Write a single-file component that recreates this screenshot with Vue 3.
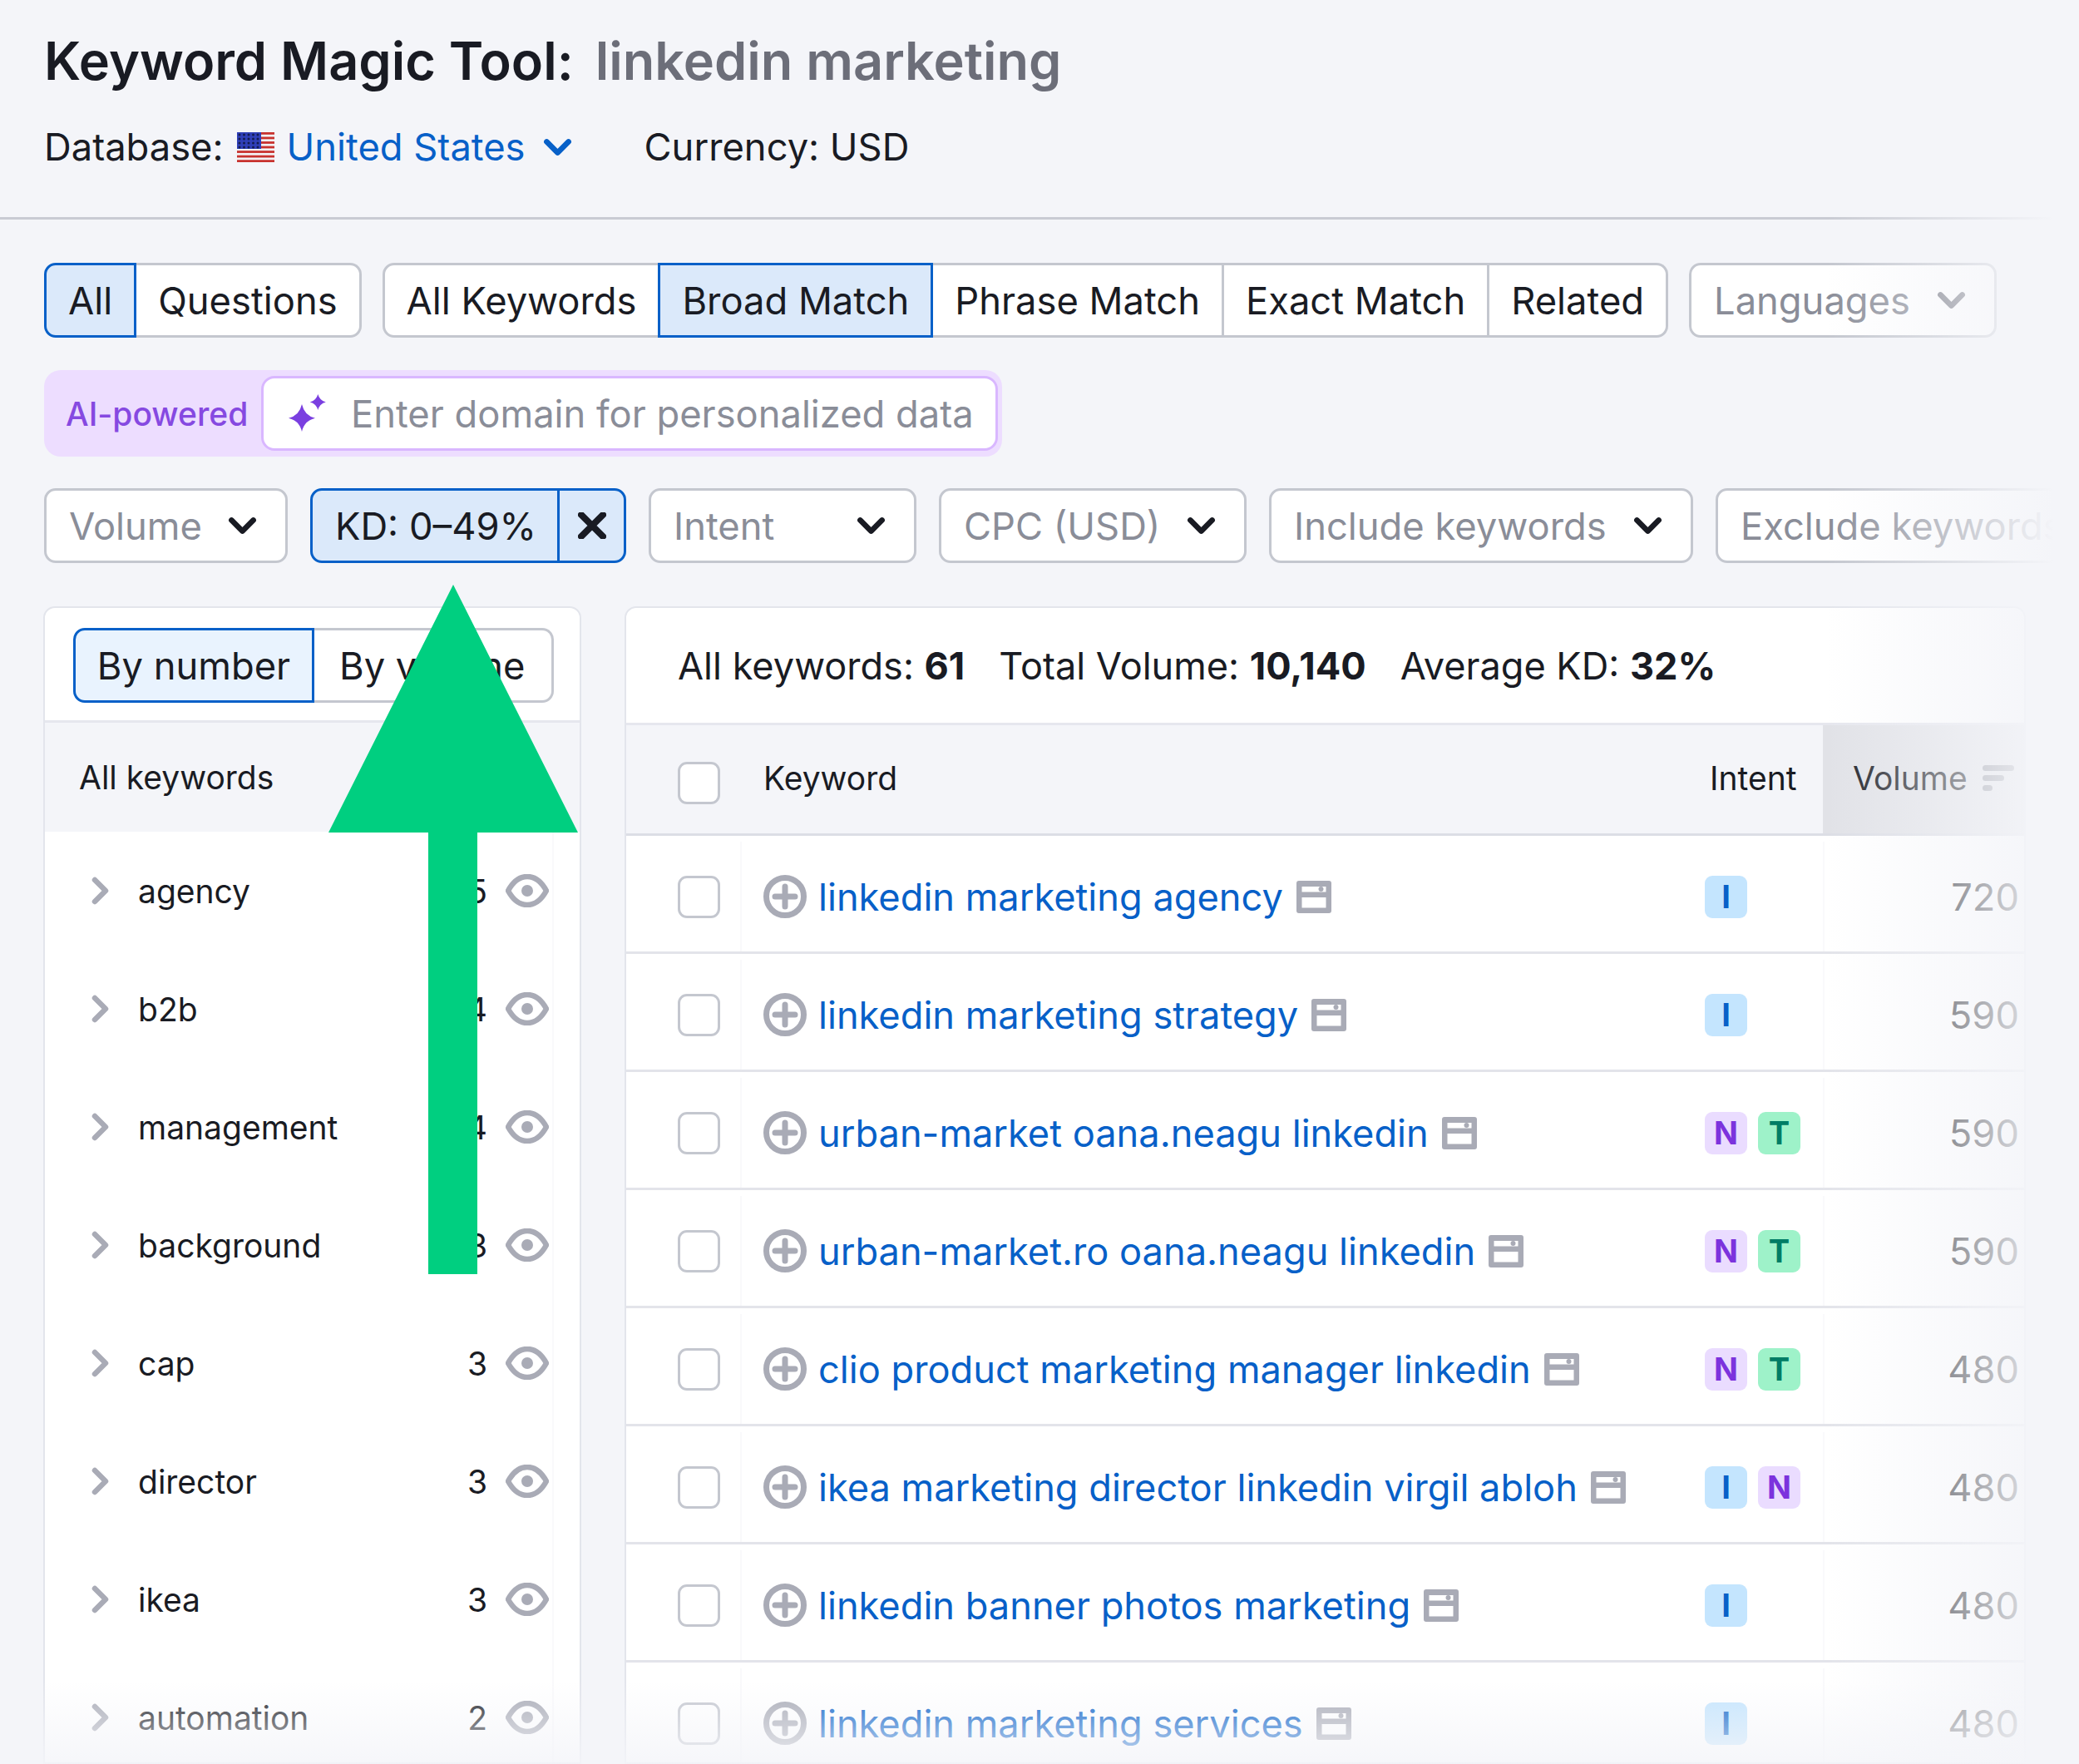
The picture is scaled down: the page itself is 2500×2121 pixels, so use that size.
<template>
  <main class="page">
    <header class="top">
      <h1><span>Keyword Magic Tool:</span><span class="query">linkedin marketing</span></h1>
      <div class="db-row">
        <span>Database:</span>
        <svg class="flag" viewBox="0 0 45 36">
          <rect width="45" height="36" fill="#f2f2f4" />
          <rect v-for="i in 7" :key="i" :y="(i - 1) * 5.54" width="45" height="2.77" fill="#c8322e" />
          <rect width="29" height="20" fill="#2f3fb8" />
          <g fill="#141c4f">
            <template v-for="y in [3, 8, 13, 18]" :key="y">
              <circle v-for="x in [3, 8.500, 14, 19.500, 25]" :key="x" :cx="x" :cy="y" r="1.500" />
            </template>
          </g>
        </svg>
        <a class="db-link">United States</a>
        <svg class="chev blue" viewBox="0 0 32 20"><path d="M4 4l12 12L28 4" /></svg>
        <span class="currency">Currency: USD</span>
      </div>
    </header>

    <section class="controls">
      <div class="tabs-row">
        <div class="seg">
          <button class="active">All</button>
          <button>Questions</button>
        </div>
        <div class="seg">
          <button>All Keywords</button>
          <button class="active">Broad Match</button>
          <button>Phrase Match</button>
          <button>Exact Match</button>
          <button>Related</button>
        </div>
        <button class="select languages">
          Languages
          <svg class="chev grey" viewBox="0 0 32 20"><path d="M4 4l12 12L28 4" /></svg>
        </button>
      </div>

      <div class="ai-box">
        <span class="ai-label">AI-powered</span>
        <div class="ai-input">
          <svg class="sparkle" viewBox="0 0 46 46">
            <path d="M16 12Q19 25.700 32 28.700 19 31.700 16 45 13 31.700 0 28.700 13 25.700 16 12z" />
            <path d="M35.300 0Q37.300 7.500 44.800 9.500 37.300 11.500 35.300 19 33.300 11.500 25.800 9.500 33.300 7.500 35.300 0z" />
          </svg>
          <span>Enter domain for personalized data</span>
        </div>
      </div>

      <div class="filters">
        <button class="select f-volume">
          Volume
          <svg class="chev" viewBox="0 0 32 20"><path d="M4 4l12 12L28 4" /></svg>
        </button>
        <div class="kd">
          <span class="kd-text">KD: 0–49%</span>
          <span class="kd-close">
            <svg viewBox="0 0 34 32"><path d="M4 3l26 26M30 3L4 29" /></svg>
          </span>
        </div>
        <button v-for="f in filters" :key="f.name" class="select" :class="f.cls">
          {{ f.name }}
          <svg class="chev" viewBox="0 0 32 20"><path d="M4 4l12 12L28 4" /></svg>
        </button>
      </div>
    </section>

    <section class="panels">
      <aside class="side">
        <div class="side-top">
          <div class="seg small">
            <button class="active">By number</button>
            <button>By volume</button>
          </div>
        </div>
        <div class="side-head">
          <span>All keywords</span>
        </div>
        <div v-for="g in groups" :key="g.name" class="side-row">
          <svg class="side-chev" viewBox="0 0 22 34"><path d="M4 4l13 13L4 30" /></svg>
          <span class="side-name">{{ g.name }}</span>
          <span class="side-count">{{ g.count }}</span>
          <svg class="eye" viewBox="0 0 52 40">
            <path d="M3 20C9 9 17 3 26 3s17 6 23 17c-6 11-14 17-23 17S9 31 3 20z" />
            <circle cx="26" cy="20" r="7" />
          </svg>
        </div>
      </aside>

      <div class="main">
        <div class="summary">
          <span>All keywords: <b>61</b></span>
          <span>Total Volume: <b>10,140</b></span>
          <span>Average KD: <b>32%</b></span>
        </div>
        <div class="grid-row head">
          <div class="check-cell"><span class="check"></span></div>
          <div class="head-cell">Keyword</div>
          <div class="head-cell intent-head">Intent</div>
          <div class="vol-head">
            Volume
            <svg class="sort" viewBox="0 0 38 31">
              <rect width="38" height="7" rx="3.500" />
              <rect y="12" width="26" height="7" rx="3.500" />
              <rect y="24" width="12" height="7" rx="3.500" />
            </svg>
          </div>
        </div>
        <div v-for="r in rows" :key="r.text" class="grid-row">
          <div class="check-cell"><span class="check"></span></div>
          <div class="kw">
            <svg class="plus" viewBox="0 0 52 52">
              <circle cx="26" cy="26" r="22.500" />
              <path d="M26 14v24M14 26h24" />
            </svg>
            <a>{{ r.text }}</a>
            <svg class="feature" viewBox="0 0 42 39">
              <path fill-rule="evenodd" d="M3 0h36a3 3 0 0 1 3 3v33a3 3 0 0 1-3 3H3a3 3 0 0 1-3-3V3a3 3 0 0 1 3-3zm3.500 7v6.500h29V7h-29zm0 13v12.500h29V20h-29z" />
              <circle cx="29.500" cy="10" r="3" />
            </svg>
          </div>
          <div class="intent">
            <span v-for="b in r.intent" :key="b" class="badge" :class="b">{{ b }}</span>
          </div>
          <div class="vol">{{ r.volume }}</div>
        </div>
      </div>
    </section>

    <div class="fade-right"></div>
    <div class="fade-bottom"></div>

    <svg class="arrow" viewBox="0 0 300 829">
      <path d="M150 0L300 298H179V829H120V298H0z" />
    </svg>
  </main>
</template>

<script setup>
const filters = [
  { name: 'Intent', cls: 'f-intent' },
  { name: 'CPC (USD)', cls: 'f-cpc' },
  { name: 'Include keywords', cls: 'f-include' },
  { name: 'Exclude keywords', cls: 'f-exclude' }
];

const groups = [
  { name: 'agency', count: 5 },
  { name: 'b2b', count: 4 },
  { name: 'management', count: 4 },
  { name: 'background', count: 3 },
  { name: 'cap', count: 3 },
  { name: 'director', count: 3 },
  { name: 'ikea', count: 3 },
  { name: 'automation', count: 2 }
];

const rows = [
  { text: 'linkedin marketing agency', intent: ['I'], volume: 720 },
  { text: 'linkedin marketing strategy', intent: ['I'], volume: 590 },
  { text: 'urban-market oana.neagu linkedin', intent: ['N', 'T'], volume: 590 },
  { text: 'urban-market.ro oana.neagu linkedin', intent: ['N', 'T'], volume: 590 },
  { text: 'clio product marketing manager linkedin', intent: ['N', 'T'], volume: 480 },
  { text: 'ikea marketing director linkedin virgil abloh', intent: ['I', 'N'], volume: 480 },
  { text: 'linkedin banner photos marketing', intent: ['I'], volume: 480 },
  { text: 'linkedin marketing services', intent: ['I'], volume: 480 }
];
</script>

<style>
html, body {
  margin: 0;
  background: #f4f5f9;
}
</style>

<style scoped>
.page {
  position: relative;
  width: 2500px;
  height: 2121px;
  overflow: hidden;
  background: #f4f5f9;
  color: #191b23;
  font-family: Inter, "Liberation Sans", sans-serif;
  font-size: 45.300px;
}

.top {
  height: 264px;
  box-sizing: border-box;
  padding: 32px 53px 0;
  border-bottom: 3px solid #c9cbd3;
}

h1 {
  display: flex;
  gap: 26px;
  margin: 0;
  font-size: 63px;
  line-height: 82px;
  font-weight: 600;
}

.query {
  color: #6c6e79;
}

.db-row {
  display: flex;
  align-items: center;
  margin-top: 33px;
  line-height: 60px;
}

.flag {
  width: 45px;
  height: 36px;
  margin-left: 16px;
}

.db-link {
  margin-left: 15px;
  color: #0760c8;
}

.chev {
  width: 35px;
  height: 22px;
  flex: none;
  fill: none;
  stroke: #191b23;
  stroke-width: 6;
  stroke-linecap: round;
  stroke-linejoin: round;
}

.chev.blue {
  stroke: #0760c8;
  margin-left: 21px;
}

.chev.grey {
  stroke: #6c6e79;
}

.currency {
  margin-left: 87px;
}

.controls {
  padding: 52px 0 0 53px;
}

.tabs-row {
  display: flex;
  gap: 25px;
}

.seg {
  display: flex;
}

button {
  font: inherit;
  color: inherit;
  cursor: pointer;
}

.seg button {
  height: 90px;
  padding: 0 26px;
  background: #fff;
  border: 3px solid #c4c7cf;
  border-left-width: 0;
  white-space: nowrap;
}

.seg button:first-child {
  border-left-width: 3px;
  border-radius: 14px 0 0 14px;
}

.seg button:last-child {
  border-radius: 0 14px 14px 0;
}

.seg button.active {
  background: #dbe9fa;
  border: 3px solid #0760c8;
  margin-left: -3px;
}

.seg button.active:first-child {
  margin-left: 0;
}

.select {
  display: flex;
  align-items: center;
  justify-content: space-between;
  flex: none;
  height: 90px;
  box-sizing: border-box;
  padding: 0 34px 0 27px;
  background: #fff;
  border: 3px solid #c4c7cf;
  border-radius: 14px;
  color: #8a8d98;
  white-space: nowrap;
}

.languages {
  width: 370px;
}

.ai-box {
  display: flex;
  align-items: center;
  width: 1152px;
  height: 104px;
  box-sizing: border-box;
  margin-top: 39px;
  padding: 0 5px 0 26px;
  background: #edddff;
  border-radius: 20px;
}

.ai-label {
  width: 235px;
  flex: none;
  font-size: 39px;
  font-weight: 500;
  color: #8649e1;
}

.ai-input {
  display: flex;
  align-items: center;
  flex: 1;
  height: 90px;
  box-sizing: border-box;
  padding-left: 30px;
  background: #fff;
  border: 3px solid #d9b7ff;
  border-radius: 16px;
  color: #8a8d98;
}

.sparkle {
  width: 46px;
  height: 46px;
  margin-right: 29px;
  fill: #7a3fe0;
}

.filters {
  display: flex;
  gap: 27px;
  margin-top: 38px;
}

.f-volume {
  width: 293px;
}

.f-intent {
  width: 322px;
}

.f-cpc {
  width: 370px;
}

.f-include {
  width: 510px;
}

.f-exclude {
  width: 520px;
}

.kd {
  display: flex;
  flex: none;
  width: 380px;
  height: 90px;
  box-sizing: border-box;
  background: #dbe9fa;
  border: 3px solid #0760c8;
  border-radius: 14px;
}

.kd-text {
  display: flex;
  align-items: center;
  width: 297px;
  box-sizing: border-box;
  padding-left: 27px;
  border-right: 3px solid #0760c8;
}

.kd-close {
  display: flex;
  align-items: center;
  justify-content: center;
  flex: 1;
}

.kd-close svg {
  width: 34px;
  height: 32px;
  fill: none;
  stroke: #191b23;
  stroke-width: 8;
  stroke-linecap: round;
}

.panels {
  display: flex;
  gap: 52px;
  margin-top: 52px;
  padding-left: 52px;
}

.side,
.main {
  box-sizing: border-box;
  background: #fff;
  border: 2px solid #e3e5ec;
  border-radius: 14px 14px 0 0;
  height: 1392px;
  overflow: hidden;
}

.side {
  width: 647px;
  flex: none;
  font-size: 39px;
}

.side-top {
  height: 138px;
  box-sizing: border-box;
  padding: 24px 0 0 34px;
  border-bottom: 3px solid #e6e7ee;
  font-size: 45.300px;
}

.seg.small button {
  flex: none;
}

.seg.small button.active {
  background: #e9f3fe;
  width: 290px;
  padding: 0;
}

.seg.small button:last-child {
  width: 288px;
  padding: 0 0 0 30px;
  text-align: left;
}

.side-head {
  display: flex;
  align-items: center;
  height: 131px;
  padding-left: 41px;
  background: #f4f5f9;
}

.side-row {
  display: flex;
  align-items: center;
  width: 612px;
  height: 142px;
  box-sizing: border-box;
  padding-left: 56px;
  border-right: 2px solid #f9f9fb;
}

.side-chev {
  width: 22px;
  height: 34px;
  flex: none;
  fill: none;
  stroke: #a9abb6;
  stroke-width: 6.500;
  stroke-linecap: round;
  stroke-linejoin: round;
}

.side-name {
  flex: 1;
  margin-left: 34px;
}

.side-count {
  margin-right: 22px;
}

.eye {
  width: 52px;
  height: 40px;
  margin-right: 4px;
  flex: none;
}

.eye path {
  fill: none;
  stroke: #a9abb6;
  stroke-width: 6.500;
}

.eye circle {
  fill: #a9abb6;
}

.main {
  width: 1685px;
  flex: none;
}

.summary {
  display: flex;
  align-items: center;
  gap: 41px;
  height: 138px;
  padding-left: 62px;
  border-bottom: 3px solid #e6e7ee;
  font-size: 45.100px;
}

b {
  font-weight: 700;
}

.grid-row {
  display: grid;
  grid-template-columns: 165px 1132px 142px 236px;
  align-items: center;
  height: 142px;
  box-sizing: border-box;
  padding-top: 7px;
  border-bottom: 3px solid #e3e4ea;
  background: #fff;
}

.grid-row.head {
  height: 133px;
  padding-top: 0;
  background: #f4f5f9;
  font-size: 39px;
  border-bottom-color: #dcdee5;
}

.head-cell {
  margin-bottom: 3px;
}

.check-cell {
  display: flex;
  align-items: center;
  padding-left: 62px;
}

.grid-row:not(.head) .check-cell {
  align-self: stretch;
  width: 139px;
  box-sizing: border-box;
  border-right: 2px solid #f9f9fb;
}

.head .check-cell {
  margin-top: 9px;
}

.check {
  width: 51px;
  height: 51px;
  box-sizing: border-box;
  background: #fff;
  border: 3px solid #c4c7cf;
  border-radius: 11px;
}

.kw {
  display: flex;
  align-items: center;
}

.plus {
  width: 52px;
  height: 52px;
  flex: none;
  fill: none;
  stroke: #a9abb6;
  stroke-width: 7;
  stroke-linecap: round;
}

.kw a {
  margin-left: 14px;
  color: #0760c8;
  white-space: nowrap;
  font-size: 45.200px;
}

.feature {
  width: 42px;
  height: 39px;
  flex: none;
  margin-left: 16px;
  fill: #a9abb6;
}

.intent {
  display: flex;
  gap: 13px;
}

.intent-head {
  padding-left: 6px;
}

.badge {
  display: flex;
  align-items: center;
  justify-content: center;
  width: 51px;
  height: 51px;
  border-radius: 9px;
  font-size: 38px;
  font-weight: 700;
}

.badge.I {
  background: #c4e5fe;
  color: #0760c8;
}

.badge.N {
  background: #eadcff;
  color: #7c33dd;
}

.badge.T {
  background: #9ef2c9;
  color: #007c65;
}

.vol {
  align-self: stretch;
  display: flex;
  align-items: center;
  justify-content: flex-end;
  border-left: 2px solid #f9f9fb;
}

.vol-head {
  display: flex;
  align-items: center;
  gap: 18px;
  height: 100%;
  box-sizing: border-box;
  margin-right: -30px;
  padding: 0 0 3px 36px;
  background: #e1e2e7;
}

.sort {
  width: 38px;
  height: 31px;
  fill: #8a8d98;
}

.fade-right {
  position: absolute;
  top: 0;
  bottom: 0;
  right: 0;
  width: 303px;
  background: linear-gradient(90deg, rgba(244, 245, 249, 0), #f4f5f9 90%);
  pointer-events: none;
}

.fade-bottom {
  position: absolute;
  left: 0;
  right: 0;
  bottom: 0;
  height: 100px;
  background: linear-gradient(180deg, rgba(244, 245, 249, 0), rgba(244, 245, 249, 0.85));
  pointer-events: none;
}

.arrow {
  position: absolute;
  left: 395px;
  top: 703px;
  width: 300px;
  height: 829px;
  fill: #00cf80;
}
</style>
